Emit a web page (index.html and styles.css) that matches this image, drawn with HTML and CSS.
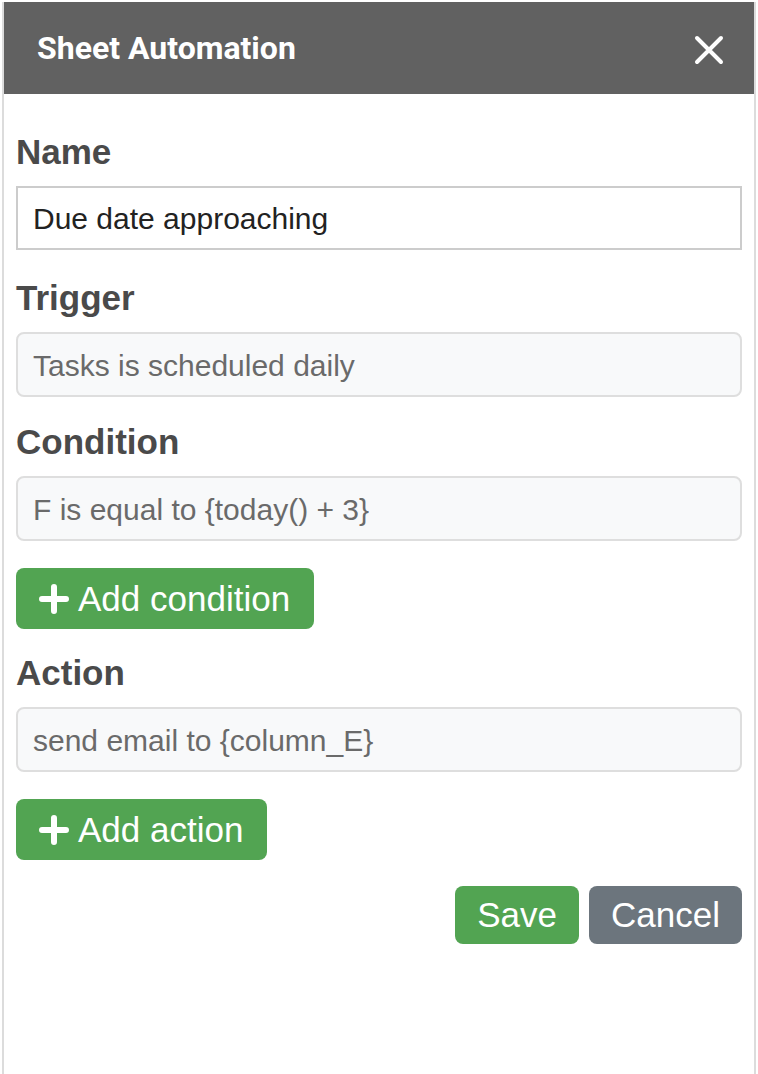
FILE: index.html
```html
<!DOCTYPE html>
<html>
<head>
<meta charset="utf-8">
<link rel="stylesheet" href="styles.css">
</head>
<body>
<div class="panel">
  <div class="header">
    <h1 class="title">Sheet Automation</h1>
    <button class="close" aria-label="Close">
      <svg width="30" height="30" viewBox="0 0 30 30"><path d="M3 3 L27 27 M27 3 L3 27" stroke="#fff" stroke-width="4" stroke-linecap="round" fill="none"/></svg>
    </button>
  </div>
  <div class="body">
    <div class="label">Name</div>
    <div class="input input-edit">Due date approaching</div>
    <div class="label">Trigger</div>
    <div class="input input-ro">Tasks is scheduled daily</div>
    <div class="label">Condition</div>
    <div class="input input-ro">F is equal to {today() + 3}</div>
    <button class="btn btn-green btn-add"><svg class="plus" width="30" height="30" viewBox="0 0 30 30"><path d="M15 3 V27 M3 15 H27" stroke="#fff" stroke-width="6" stroke-linecap="round"/></svg>Add condition</button>
    <div class="label">Action</div>
    <div class="input input-ro">send email to {column_E}</div>
    <button class="btn btn-green btn-add"><svg class="plus" width="30" height="30" viewBox="0 0 30 30"><path d="M15 3 V27 M3 15 H27" stroke="#fff" stroke-width="6" stroke-linecap="round"/></svg>Add action</button>
    <div class="footer">
      <button class="btn btn-green btn-foot">Save</button>
      <button class="btn btn-gray btn-foot">Cancel</button>
    </div>
  </div>
</div>
</body>
</html>
```
FILE: styles.css
```css
html, body {
  margin: 0;
  padding: 0;
  background: #fff;
}
body {
  font-family: "Liberation Sans", Arial, sans-serif;
}
.panel {
  margin: 2px 0 0 2px;
  width: 750px;
  height: 1072px;
  border-left: 2px solid #dcdcdc;
  border-right: 2px solid #dcdcdc;
  box-sizing: content-box;
}
.header {
  height: 92px;
  background: #616161;
  display: flex;
  align-items: center;
  justify-content: space-between;
  padding: 0 30px 0 33px;
}
.title {
  margin: 0;
  color: #fff;
  font-family: Roboto, "Liberation Sans", sans-serif;
  font-weight: 700;
  font-size: 32px;
}
.close {
  background: none;
  border: 0;
  padding: 0;
  display: flex;
  margin-top: 4px;
}
.body {
  padding: 40px 12px 0 12px;
  display: flex;
  flex-direction: column;
  align-items: flex-start;
}
.label {
  font-size: 35px;
  line-height: 36px;
  font-weight: 700;
  color: #4a4a4a;
  margin-bottom: 16px;
}
.input {
  align-self: stretch;
  box-sizing: border-box;
  display: flex;
  align-items: center;
  padding: 2px 15px 0;
  font-size: 30px;
}
.input-edit {
  height: 64px;
  border: 2px solid #cccccc;
  background: #fff;
  color: #222;
  margin-bottom: 30px;
}
.input-ro {
  height: 65px;
  border: 2px solid #dedede;
  border-radius: 8px;
  background: #f8f9fa;
  color: #6a6a6a;
  margin-bottom: 27px;
}
.btn {
  border: 0;
  color: #fff;
  font-family: "Liberation Sans", Arial, sans-serif;
  border-radius: 8px;
  display: flex;
  align-items: center;
  justify-content: center;
}
.btn-green { background: #52a452; }
.btn-gray { background: #6c757d; }
.btn-add {
  height: 61px;
  font-size: 35px;
  padding: 0 24px 0 23px;
  margin-bottom: 26px;
}
.plus { margin-right: 9px; }
.footer {
  align-self: stretch;
  display: flex;
  justify-content: flex-end;
  gap: 10px;
}
.btn-foot {
  height: 58px;
  font-size: 35px;
  padding: 0 22px;
}
```
